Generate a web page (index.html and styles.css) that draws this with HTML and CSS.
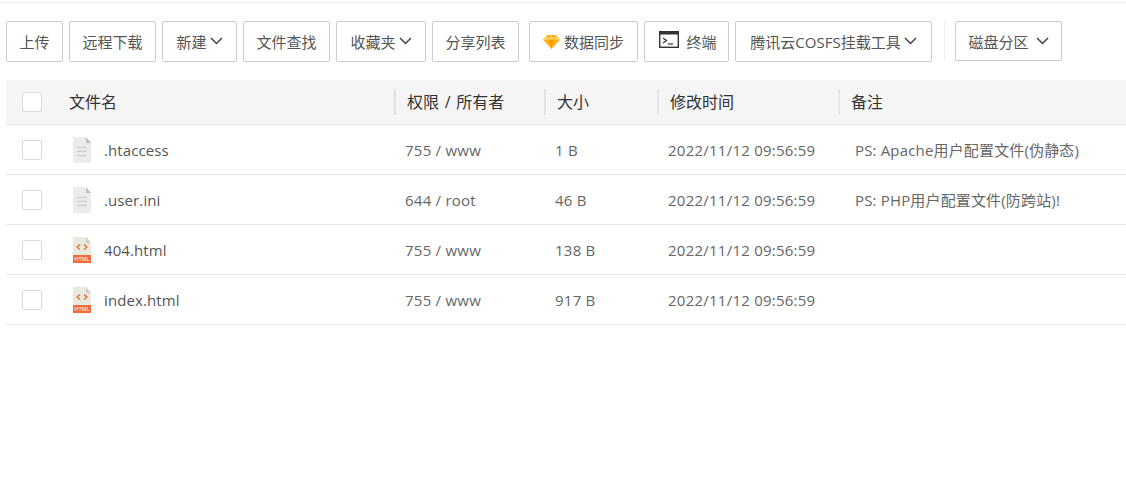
FILE: index.html
```html
<!DOCTYPE html>
<html lang="zh-CN">
<head>
<meta charset="utf-8">
<title>文件管理</title>
<link rel="stylesheet" href="styles.css">
</head>
<body>
<div class="page">
  <div class="toolbar">
    <button class="btn w-upload">上传</button>
    <button class="btn w-remote">远程下载</button>
    <button class="btn w-new">新建<svg class="chev" viewBox="0 0 13 8"><path d="M1 1l5.500 5.500L12 1"/></svg></button>
    <button class="btn w-find">文件查找</button>
    <button class="btn w-fav">收藏夹<svg class="chev" viewBox="0 0 13 8"><path d="M1 1l5.500 5.500L12 1"/></svg></button>
    <button class="btn w-share">分享列表</button>
    <button class="btn w-sync gap-l"><svg class="gem" viewBox="0 0 18 16"><path fill="#ffb31a" d="M4 1h10l4 5-9 10L0 6z"/><path fill="#ffd36b" d="M4 1l2 5H0zM14 1l-2 5h6zM9 1l3 5H6z"/><path fill="#ff9d00" d="M6 6h6l-3 10z"/></svg>数据同步</button>
    <button class="btn w-term"><svg class="term" viewBox="0 0 20 17"><rect x=".7" y=".7" width="18.600" height="15.600" fill="#fff" stroke="#333" stroke-width="1.400"/><rect x="0" y="0" width="20" height="3.500" fill="#333"/><path d="M4 7l3.500 2.500L4 12" fill="none" stroke="#333" stroke-width="1.200"/><path d="M9 13h5" stroke="#333" stroke-width="1.200"/></svg>终端</button>
    <button class="btn w-cos">腾讯云COSFS挂载工具<svg class="chev" viewBox="0 0 13 8"><path d="M1 1l5.500 5.500L12 1"/></svg></button>
    <span class="divider"></span>
    <button class="btn w-disk">磁盘分区<svg class="chev wide" viewBox="0 0 13 8"><path d="M1 1l5.500 5.500L12 1"/></svg></button>
  </div>

  <div class="table">
    <div class="row head">
      <div class="check-cell"><span class="check"></span></div>
      <div class="name">文件名</div>
      <div class="col sep">权限 / 所有者</div>
      <div class="col sep">大小</div>
      <div class="col sep thin">修改时间</div>
      <div class="col sep thin">备注</div>
    </div>

    <div class="row">
      <div class="check-cell"><span class="check"></span></div>
      <div class="name"><svg class="ficon" viewBox="0 0 20 26"><path fill="#ececec" d="M1 0h13l5 6v20H1z"/><path fill="#bdbdbd" d="M14 0l5 6h-5z"/><path stroke="#d0d0d0" stroke-width="1.400" d="M5 10.500h10M5 14.500h10M5 18.500h10"/></svg>.htaccess</div>
      <div class="col">755 / www</div>
      <div class="col">1 B</div>
      <div class="col">2022/11/12 09:56:59</div>
      <div class="col note">PS: Apache用户配置文件(伪静态)</div>
    </div>

    <div class="row">
      <div class="check-cell"><span class="check"></span></div>
      <div class="name"><svg class="ficon" viewBox="0 0 20 26"><path fill="#ececec" d="M1 0h13l5 6v20H1z"/><path fill="#bdbdbd" d="M14 0l5 6h-5z"/><path stroke="#d0d0d0" stroke-width="1.400" d="M5 10.500h10M5 14.500h10M5 18.500h10"/></svg>.user.ini</div>
      <div class="col">644 / root</div>
      <div class="col">46 B</div>
      <div class="col">2022/11/12 09:56:59</div>
      <div class="col note">PS: PHP用户配置文件(防跨站)!</div>
    </div>

    <div class="row">
      <div class="check-cell"><span class="check"></span></div>
      <div class="name"><svg class="ficon" viewBox="0 0 20 26"><path fill="#e9e9e0" d="M1 0h13l5 6v20H1z"/><path fill="#cfcfc4" d="M14 0l5 6h-5z"/><path fill="none" stroke="#e8703a" stroke-width="1.400" d="M8 7.500l-3 2.500 3 2.500M12 7.500l3 2.500-3 2.500"/><rect x="1" y="18" width="18" height="8" fill="#f26b3a"/><text class="ftext" x="10" y="24.300" text-anchor="middle">HTML</text></svg>404.html</div>
      <div class="col">755 / www</div>
      <div class="col">138 B</div>
      <div class="col">2022/11/12 09:56:59</div>
      <div class="col note"></div>
    </div>

    <div class="row">
      <div class="check-cell"><span class="check"></span></div>
      <div class="name"><svg class="ficon" viewBox="0 0 20 26"><path fill="#e9e9e0" d="M1 0h13l5 6v20H1z"/><path fill="#cfcfc4" d="M14 0l5 6h-5z"/><path fill="none" stroke="#e8703a" stroke-width="1.400" d="M8 7.500l-3 2.500 3 2.500M12 7.500l3 2.500-3 2.500"/><rect x="1" y="18" width="18" height="8" fill="#f26b3a"/><text class="ftext" x="10" y="24.300" text-anchor="middle">HTML</text></svg>index.html</div>
      <div class="col">755 / www</div>
      <div class="col">917 B</div>
      <div class="col">2022/11/12 09:56:59</div>
      <div class="col note"></div>
    </div>
  </div>
</div>
</body>
</html>
```

FILE: styles.css
```css
* { box-sizing: border-box; }
html, body { margin: 0; padding: 0; background: #fff; }
body {
  font-family: "Open Sans", "Noto Sans CJK SC", sans-serif;
  font-size: 15px;
  color: #666;
}
.page {
  margin-top: 2px;
  border-top: 1px solid #eee;
  padding: 18px 0 0 6px;
}
.toolbar {
  display: flex;
  align-items: flex-start;
  gap: 6px;
  height: 59px;
}
.btn {
  display: flex;
  align-items: center;
  justify-content: center;
  height: 41px;
  padding: 0;
  border: 1px solid #ccc;
  border-radius: 2px;
  background: #fff;
  color: #555;
  font: inherit;
  white-space: nowrap;
}
.w-upload { width: 57px; }
.w-remote { width: 87px; }
.w-new { width: 75px; }
.w-find { width: 87px; }
.w-fav { width: 90px; }
.w-share { width: 87px; }
.w-sync { width: 109px; }
.w-term { width: 85px; }
.w-cos { width: 197px; }
.w-disk { width: 107px; height: 40px; }
.gap-l { margin-left: 4px; }
.chev {
  width: 13px;
  height: 8px;
  margin-left: 3px;
  margin-top: -1px;
  fill: none;
  stroke: #444;
  stroke-width: 1.500;
}
.chev.wide { margin-left: 7px; margin-top: 0; }
.gem { width: 17px; height: 15px; margin-right: 4px; }
.term { width: 20px; height: 17px; margin: -4px 7px 0 3px; }
.divider {
  width: 1px;
  height: 40px;
  margin: 0 4px 0 6px;
  background: #eee;
}
.row {
  display: grid;
  grid-template-columns: 63px 325px 150px 113px 181px 1fr;
  align-items: center;
  height: 50px;
  border-bottom: 1px solid #e8e8e8;
}
.row.head {
  height: 45px;
  background: #f5f5f5;
  color: #333;
  font-size: 16px;
}
.check-cell { padding-left: 16px; display: flex; }
.check {
  width: 20px;
  height: 20px;
  border: 1px solid #d9d9d9;
  border-radius: 2px;
  background: #fff;
}
.name {
  display: flex;
  align-items: center;
  font-size: 15px;
  letter-spacing: .1px;
  color: #555;
}
.head .name { color: #333; font-size: 16px; letter-spacing: 0; margin-top: -2px; }
.ficon { width: 20px; height: 26px; margin: 0 12px 0 3px; }
.ftext { font-family: "Liberation Sans", sans-serif; font-size: 5.500px; font-weight: 400; fill: #fff; }
.col { padding-left: 11px; white-space: nowrap; letter-spacing: .24px; }
.sep {
  height: 26px;
  line-height: 27px;
  border-left: 2px solid #e2e2e2;
  letter-spacing: 0;
  word-spacing: 1.500px;
}
.sep.thin { border-left-color: #e6e6e6; }
.note { padding-left: 17px; letter-spacing: .16px; }
```
